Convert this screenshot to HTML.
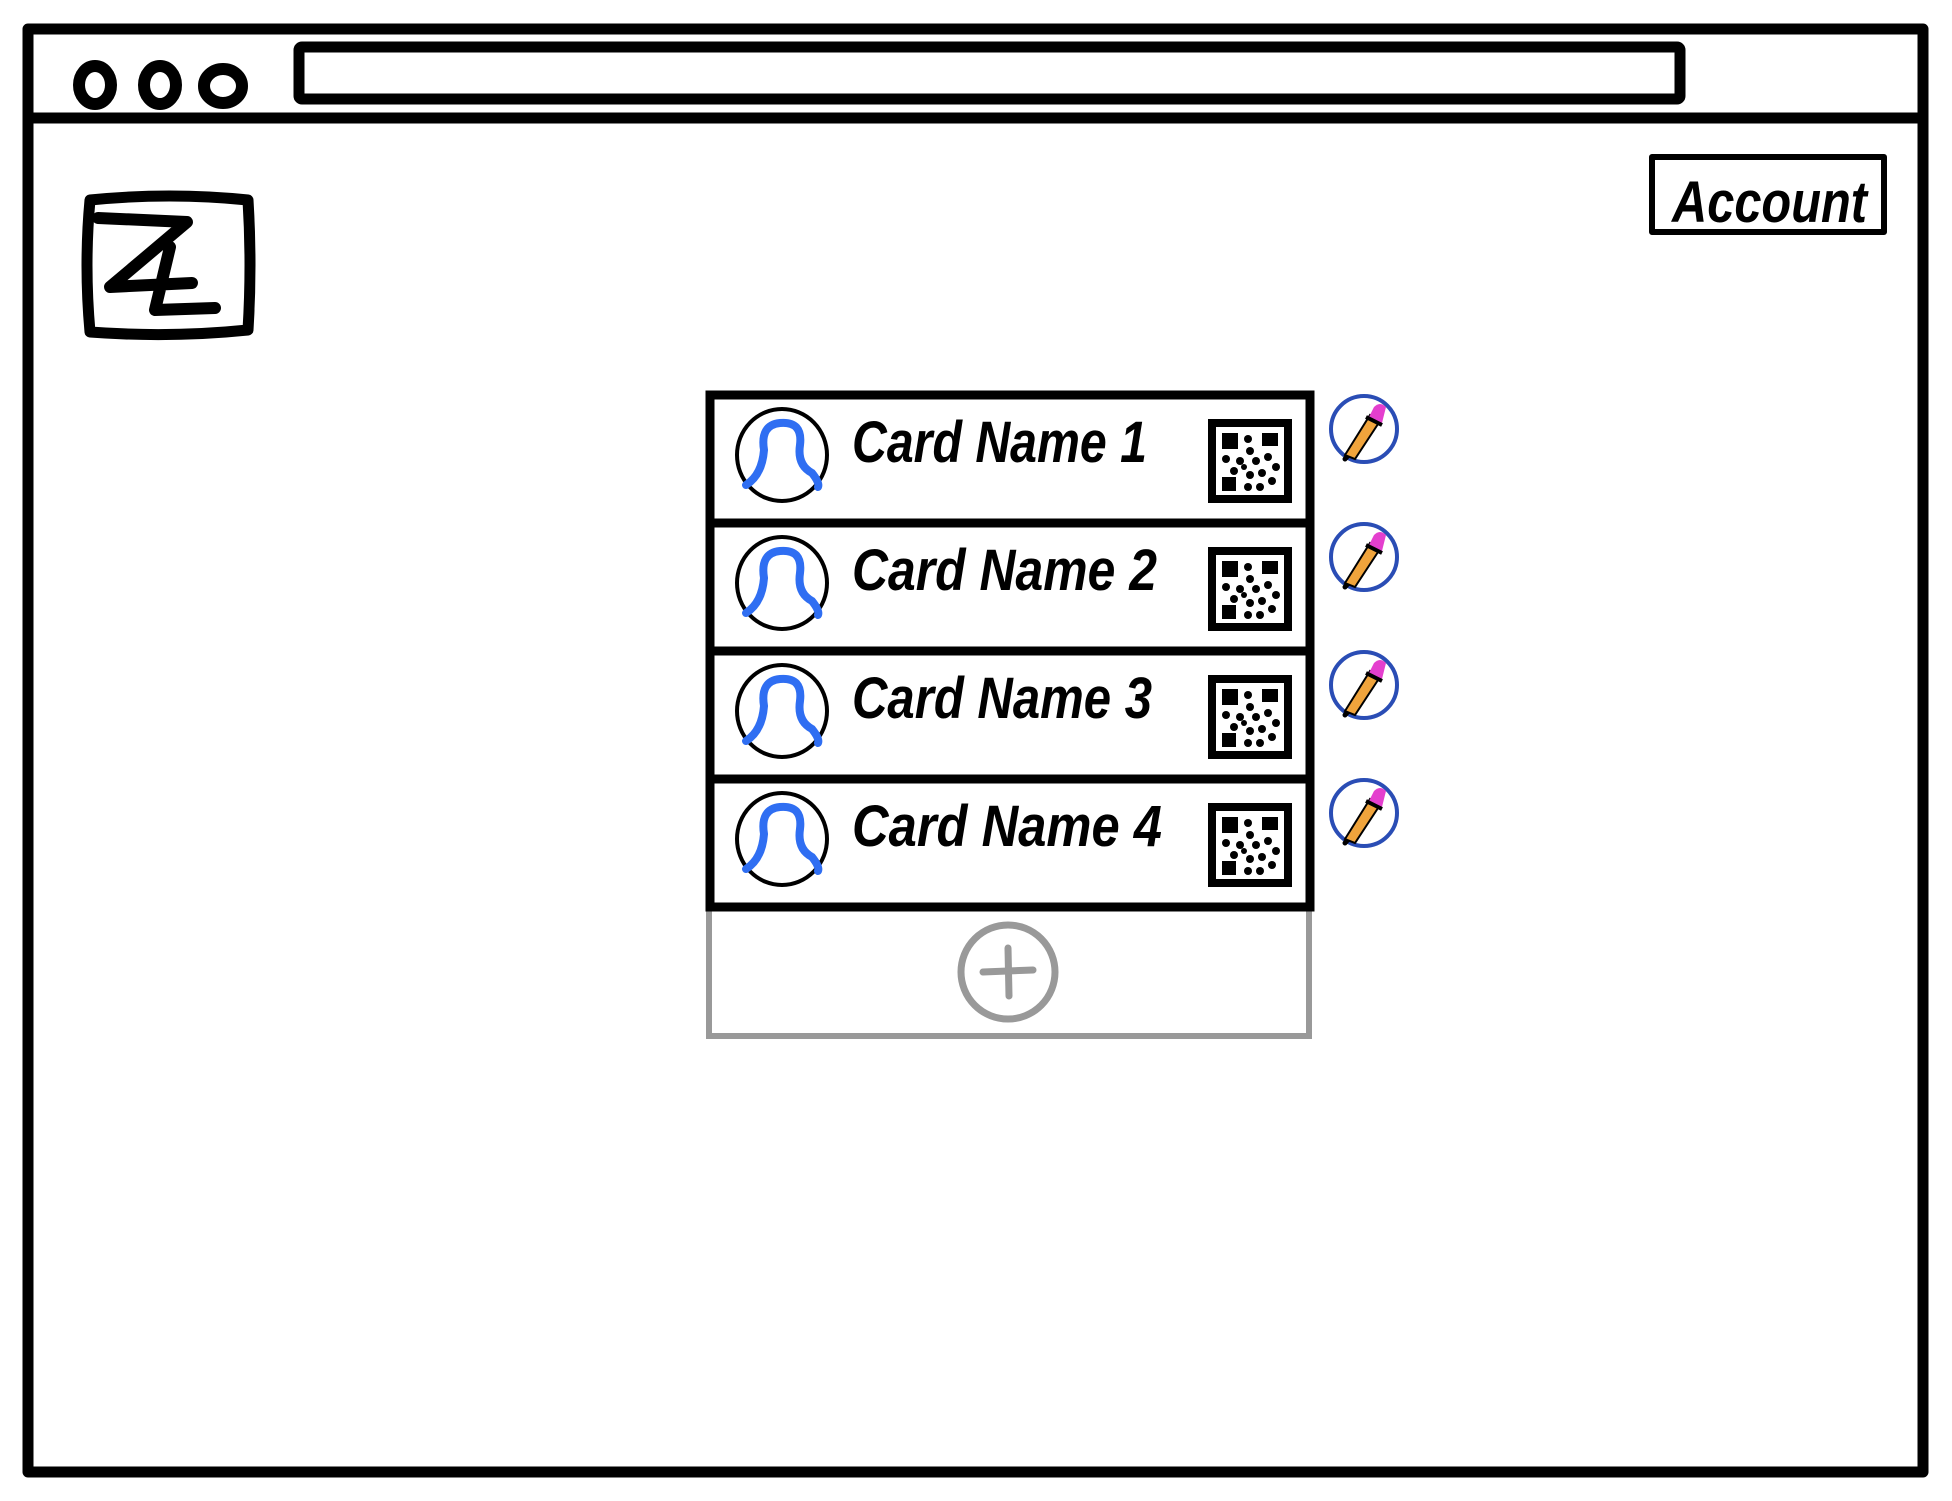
<!DOCTYPE html>
<html><head><meta charset="utf-8"><style>
html,body{margin:0;padding:0;background:#fff;}
svg{display:block}
text{font-family:"Liberation Sans",sans-serif;font-weight:bold;}
</style></head><body>
<svg width="1952" height="1501" viewBox="0 0 1952 1501" xmlns="http://www.w3.org/2000/svg">
<rect width="1952" height="1501" fill="#fff"/>
<g fill="none" stroke="#000" stroke-linecap="round" stroke-linejoin="round">
<rect x="28" y="29" width="1895" height="1443" stroke-width="11"/>
<line x1="28" y1="118" x2="1923" y2="118" stroke-width="11"/>
<ellipse cx="95" cy="85" rx="16" ry="19" stroke-width="12"/>
<ellipse cx="160" cy="85" rx="16" ry="19" stroke-width="12"/>
<ellipse cx="223" cy="86" rx="19" ry="17" stroke-width="12"/>
<rect x="299" y="47" width="1381" height="52" rx="3" stroke-width="11"/>
<path d="M90 200 Q170 192 248 200 Q252 265 248 330 Q170 338 90 332 Q84 265 90 200Z" stroke-width="11"/>
<path d="M98 218 L187 222 L110 287 L192 283 M170 247 L155 310 L215 308" stroke-width="12"/>
<rect x="1652" y="157" width="232" height="75" stroke-width="6"/>
</g>
<text x="1672" y="222" font-size="58" font-style="italic" textLength="195" lengthAdjust="spacingAndGlyphs">Account</text>

<!-- add box -->
<rect x="709" y="905" width="600" height="131" fill="none" stroke="#999" stroke-width="6"/>
<circle cx="1008" cy="972" r="47" fill="none" stroke="#999" stroke-width="7"/>
<path d="M983 972 L1033 970 M1008 948 L1009 996" stroke="#999" stroke-width="7" stroke-linecap="round"/>

<defs>
<g id="row">
<rect x="710" y="0" width="600" height="128" fill="#fff" stroke="#000" stroke-width="9"/>
<ellipse cx="782" cy="60" rx="45" ry="46" fill="none" stroke="#000" stroke-width="4"/>
<path d="M746 90 Q762 80 764 55 Q760 30 780 28 Q803 26 800 50 Q797 70 812 78 Q820 88 818 92" fill="none" stroke="#2f6ef2" stroke-width="8" stroke-linecap="round"/>
<rect x="1212" y="28" width="76" height="76" fill="#fff" stroke="#000" stroke-width="8"/>
<g fill="#000">
<rect x="1222" y="38" width="16" height="16"/><rect x="1262" y="38" width="16" height="13"/><rect x="1222" y="82" width="14" height="14"/>
<circle cx="1248" cy="44" r="4"/><circle cx="1250" cy="56" r="4"/><circle cx="1226" cy="64" r="4"/><circle cx="1240" cy="66" r="4"/>
<circle cx="1256" cy="66" r="4"/><circle cx="1268" cy="62" r="4"/><circle cx="1276" cy="72" r="4"/><circle cx="1234" cy="76" r="4"/>
<circle cx="1250" cy="80" r="4"/><circle cx="1262" cy="78" r="4"/><circle cx="1272" cy="86" r="4"/><circle cx="1248" cy="92" r="4"/>
<circle cx="1260" cy="92" r="4"/><circle cx="1244" cy="72" r="3"/>
</g>
<circle cx="1364" cy="34" r="33" fill="#fff" stroke="#2a4db5" stroke-width="4"/>
<path d="M1352 56 L1345 64" stroke="#000" stroke-width="5" stroke-linecap="round"/>
<path d="M1345 60 L1370 20 L1380 26 L1355 64 Z" fill="#f0a43c" stroke="#000" stroke-width="2"/>
<path d="M1368 24 L1374 12 Q1380 6 1386 12 L1382 28 Z" fill="#e43fce"/>
<path d="M1366 22 L1382 30" stroke="#000" stroke-width="4"/>
</g>
</defs>
<use href="#row" y="395"/>
<use href="#row" y="523"/>
<use href="#row" y="651"/>
<use href="#row" y="779"/>
<g font-size="58" font-style="italic">
<text x="852" y="462" textLength="295" lengthAdjust="spacingAndGlyphs">Card Name 1</text>
<text x="852" y="590" textLength="305" lengthAdjust="spacingAndGlyphs">Card Name 2</text>
<text x="852" y="718" textLength="300" lengthAdjust="spacingAndGlyphs">Card Name 3</text>
<text x="852" y="846" textLength="310" lengthAdjust="spacingAndGlyphs">Card Name 4</text>
</g>
</svg>
</body></html>
